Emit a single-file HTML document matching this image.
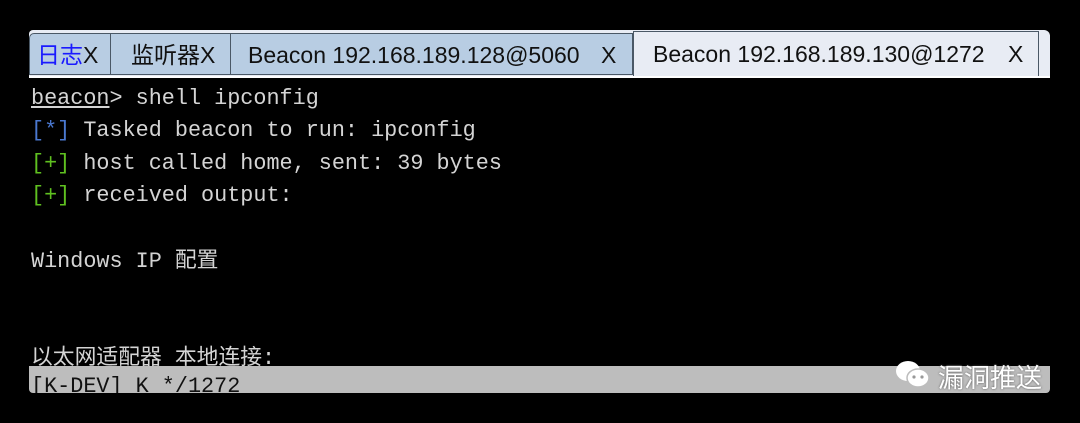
<!DOCTYPE html>
<html><head><meta charset="utf-8"><style>
body{margin:0;width:1080px;height:423px;background:#000;overflow:hidden;position:relative;font-family:"Liberation Sans","Noto Sans CJK SC",sans-serif}
.bar{position:absolute;left:29px;top:30px;width:1021px;height:46px;background:#e8ecf4;border-radius:4px 6px 0 0}
.tab{position:absolute;top:33px;height:42px;background:#b8cde3;border:1px solid #4a5866;box-sizing:border-box;font-size:23px;line-height:42px;color:#111;white-space:nowrap}
.line{position:absolute;left:29px;top:76px;width:1021px;height:2px;background:#fff}
.t{position:absolute;left:31px;font-family:"Liberation Mono","Noto Sans CJK SC",monospace;font-size:21.8px;color:#d4d4d4;white-space:pre;line-height:24px}
.b{color:#4a78d0}.g{color:#5fc020}
.status{position:absolute;left:29px;top:366px;width:1021px;height:27px;background:#bdbdbd;border-radius:0 0 4px 4px;overflow:hidden}
</style></head><body>
<div class="bar"></div>
<div class="tab" style="left:29px;width:82px;padding-left:7px;border-radius:5px 0 0 0"><span style="color:#1a1aff">日志</span>X</div>
<div class="tab" style="left:110px;width:121px;padding-left:20px">监听器X</div>
<div class="tab" style="left:230px;width:403px;padding-left:17px">Beacon 192.168.189.128@5060<span style="position:absolute;left:370px">X</span></div>
<div class="tab" style="left:633px;width:406px;padding-left:19px;background:#e8ecf4;top:31px;height:46px;line-height:44px;border-bottom:none">Beacon 192.168.189.130@1272<span style="position:absolute;left:374px">X</span></div>
<div class="line"></div>
<div class="t" style="top:87px"><span style="text-decoration:underline">beacon</span>&gt; shell ipconfig</div>
<div class="t" style="top:119px"><span class="b">[*]</span> Tasked beacon to run: ipconfig</div>
<div class="t" style="top:152px"><span class="g">[+]</span> host called home, sent: 39 bytes</div>
<div class="t" style="top:184px"><span class="g">[+]</span> received output:</div>
<div class="t" style="top:250px">Windows IP 配置</div>
<div class="t" style="top:347px">以太网适配器 本地连接:</div>
<div class="status"><div class="t" style="left:2px;top:9px;color:#111">[K-DEV] K */1272</div></div>
<div style="position:absolute;left:894px;top:358px;width:36px;height:30px">
<svg width="40" height="34" viewBox="0 0 40 34"><ellipse cx="14" cy="13" rx="12" ry="10" fill="#fff"/><ellipse cx="24" cy="20" rx="11" ry="9" fill="#fff" stroke="#bdbdbd" stroke-width="1.5"/><circle cx="20" cy="19" r="1.6" fill="#999"/><circle cx="28" cy="19" r="1.6" fill="#999"/></svg></div>
<div style="position:absolute;left:938px;top:358px;font-size:26px;color:#fff;text-shadow:0 0 2px #555">漏洞推送</div>
</body></html>
